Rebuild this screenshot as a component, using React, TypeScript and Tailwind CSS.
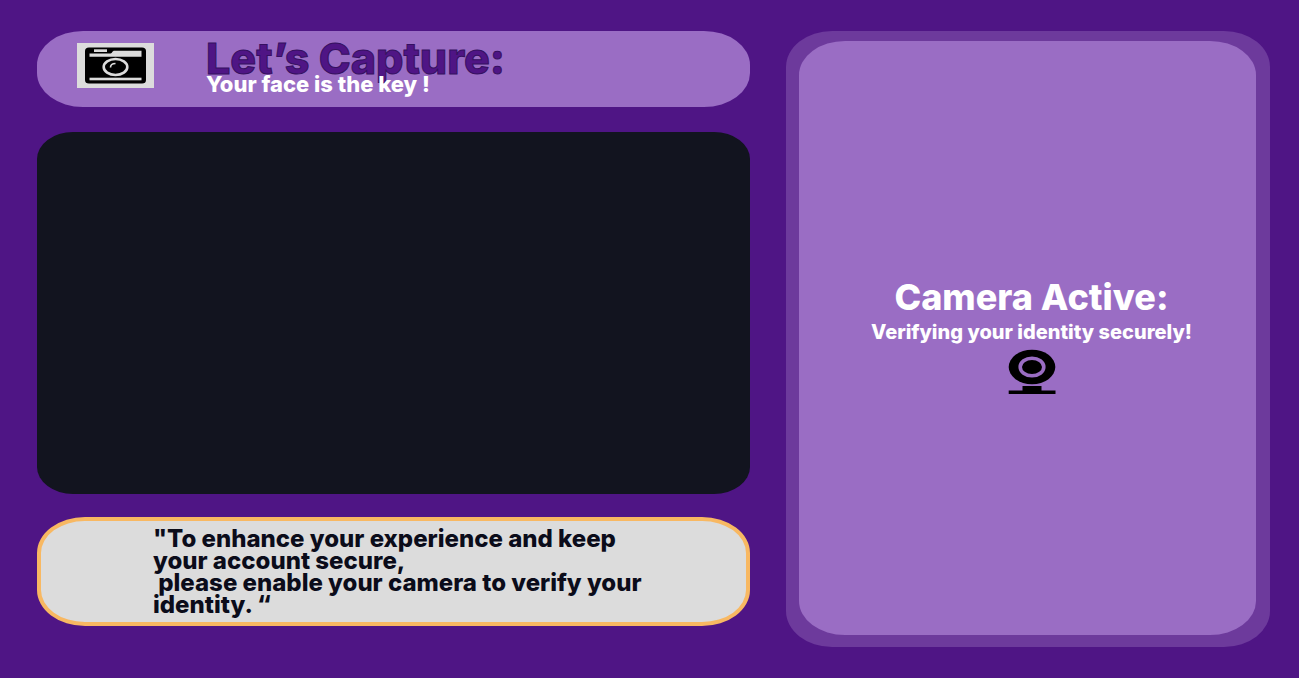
function CameraIcon() {
  return (
    <svg viewBox="0 0 77 45" className="h-[45px] w-[77px] shrink-0" role="img" aria-label="Camera">
      <rect width="77" height="45" fill="#dcdcdc" />
      <rect x="8" y="4.500" width="61" height="36" rx="4" ry="3.500" fill="#000" />
      <path d="M17 6.300h13v2.700h-13z" fill="#dcdcdc" />
      <path d="M12.500 10.500h21c2 0 1.500-2.700 4-2.700h27v6h-52z" fill="#dcdcdc" />
      <ellipse cx="38.500" cy="24" rx="14" ry="10" fill="#000" />
      <ellipse cx="38.500" cy="24" rx="11.800" ry="8" fill="none" stroke="#dcdcdc" strokeWidth="2.600" />
      <path d="M33.500 24.500c0-2.700 2-4 5-4" fill="none" stroke="#dcdcdc" strokeWidth="1.600" />
      <rect x="12.500" y="34.700" width="52" height="2.600" fill="#dcdcdc" />
    </svg>
  );
}

function WebcamIcon() {
  return (
    <svg viewBox="0 0 48 46" className="h-[46px] w-12" aria-hidden="true">
      <ellipse cx="24" cy="18" rx="23.300" ry="17.300" fill="#000" />
      <ellipse cx="24" cy="18" rx="11.800" ry="8.800" fill="none" stroke="#9a6dc4" strokeWidth="3.600" />
      <path d="M14.500 37h19v4.500h14V45H.7v-3.500h13.800z" fill="#000" />
    </svg>
  );
}

export default function App() {
  return (
    <main className="grid min-h-screen grid-cols-[713fr_484fr] gap-9 bg-[#4f1585] pt-[31px] pr-[29px] pb-[31px] pl-[37px] font-['Inter',sans-serif]">
      <div className="flex flex-col pb-[21px]">
        <header className="flex h-[76px] items-start gap-[52px] rounded-[46px/34px] bg-[#9a6dc4] pt-3 pl-10">
          <CameraIcon />
          <div>
            <h1 className="text-[43px] leading-[30px] font-extrabold text-[#4f1585] [-webkit-text-stroke:1px_#351060]">
              Let’s Capture:
            </h1>
            <p className="text-[22px] leading-[22px] font-extrabold text-white">Your face is the key !</p>
          </div>
        </header>

        <section
          aria-label="Camera preview"
          className="mt-[25px] min-h-[200px] flex-1 rounded-[36px/27px] bg-[#12141f]"
        />

        <section className="mt-[23px] rounded-[48px/36px] border-4 border-[#f8b862] bg-[#dcdcdc] pt-[7px] pb-[6px] pl-[112px]">
          <p className="text-[24px] leading-[22px] font-extrabold whitespace-pre text-[#0b0c1a]">
            {'"To enhance your experience and keep\nyour account secure,\n please enable your camera to verify your\nidentity. “'}
          </p>
        </section>
      </div>

      <aside className="flex rounded-[46px/36px] bg-[#6d3a9c] pt-[10px] pr-[14px] pb-3 pl-[13px]">
        <div className="flex flex-1 flex-col items-center justify-center rounded-[46px/34px] bg-[#9a6dc4] pb-1 pl-2 text-white">
          <h2 className="text-[36px] leading-[40px] font-extrabold">Camera Active:</h2>
          <p className="mb-[2px] text-[20px] leading-[30px] font-extrabold">Verifying your identity securely!</p>
          <WebcamIcon />
        </div>
      </aside>
    </main>
  );
}
